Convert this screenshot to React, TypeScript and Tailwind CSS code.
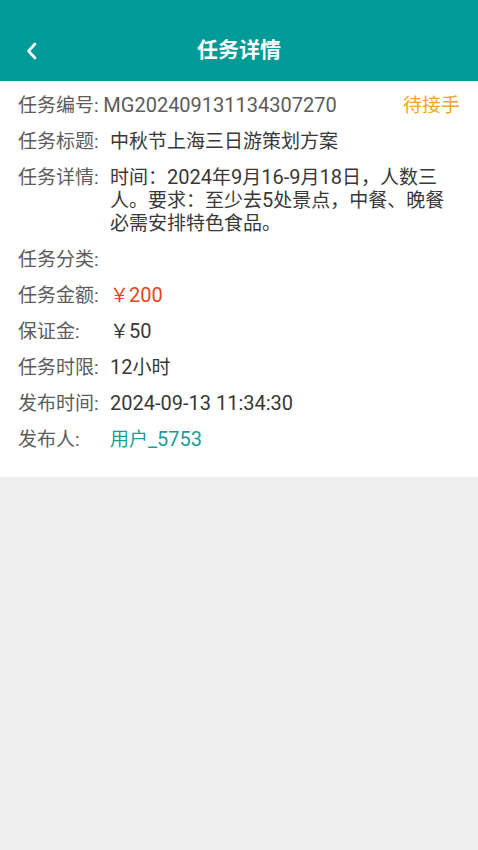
import React from "react";

const font = { fontFamily: "Roboto, 'Noto Sans CJK SC', sans-serif" };

// latin runs render a touch larger than the CJK glyphs in the reference
const L = ({ children }: { children: React.ReactNode }) => (
  <span className="text-[20px]">{children}</span>
);

const Row = ({
  label,
  children,
}: {
  label: string;
  children?: React.ReactNode;
}) => (
  <div className="flex items-start">
    <div className="w-[92px] shrink-0 text-[#5c5c5c]">{label}</div>
    <div className="flex-1 pr-[10px] text-[#383838]">{children}</div>
  </div>
);

export default function App() {
  return (
    <div
      className="min-h-[850px] w-full bg-[#eeeeee] text-[19px] leading-[23px]"
      style={font}
    >
      {/* header, top 20px is the status bar area */}
      <div className="flex h-[81px] items-center bg-[#009a97] px-[22px] pt-[20px]">
        <button className="flex h-[40px] w-[20px] items-center justify-center">
          <svg width="14" height="18" viewBox="0 0 14 18" fill="none">
            <path
              d="M10 2 L3.5 9 L10 16"
              stroke="white"
              strokeWidth="2.6"
              strokeLinecap="round"
              strokeLinejoin="round"
            />
          </svg>
        </button>
        <h1 className="flex-1 pr-[20px] text-center text-[21px] font-bold text-white">
          任务详情
        </h1>
      </div>

      {/* details */}
      <div className="flex flex-col gap-[13px] bg-white px-[18px] pt-[13px] pb-[26px]">
        <div className="flex items-start justify-between">
          <div className="text-[#5c5c5c]">
            任务编号: <L>MG202409131134307270</L>
          </div>
          <div className="text-[#f0a52a]">待接手</div>
        </div>
        <Row label="任务标题:">中秋节上海三日游策划方案</Row>
        <Row label="任务详情:">
          <div className="leading-[23px]">
            时间：<L>2024</L>年<L>9</L>月<L>16-9</L>月<L>18</L>日，人数三人。要求：至少去<L>5</L>处景点，中餐、晚餐必需安排特色食品。
          </div>
        </Row>
        <Row label="任务分类:" />
        <Row label="任务金额:">
          <span className="text-[#e4461f]">
            ￥<L>200</L>
          </span>
        </Row>
        <Row label="保证金:">
          ￥<L>50</L>
        </Row>
        <Row label="任务时限:">
          <L>12</L>小时
        </Row>
        <Row label="发布时间:">
          <L>2024-09-13 11:34:30</L>
        </Row>
        <Row label="发布人:">
          <span className="text-[#1a9d96]">
            用户<L>_5753</L>
          </span>
        </Row>
      </div>
    </div>
  );
}
